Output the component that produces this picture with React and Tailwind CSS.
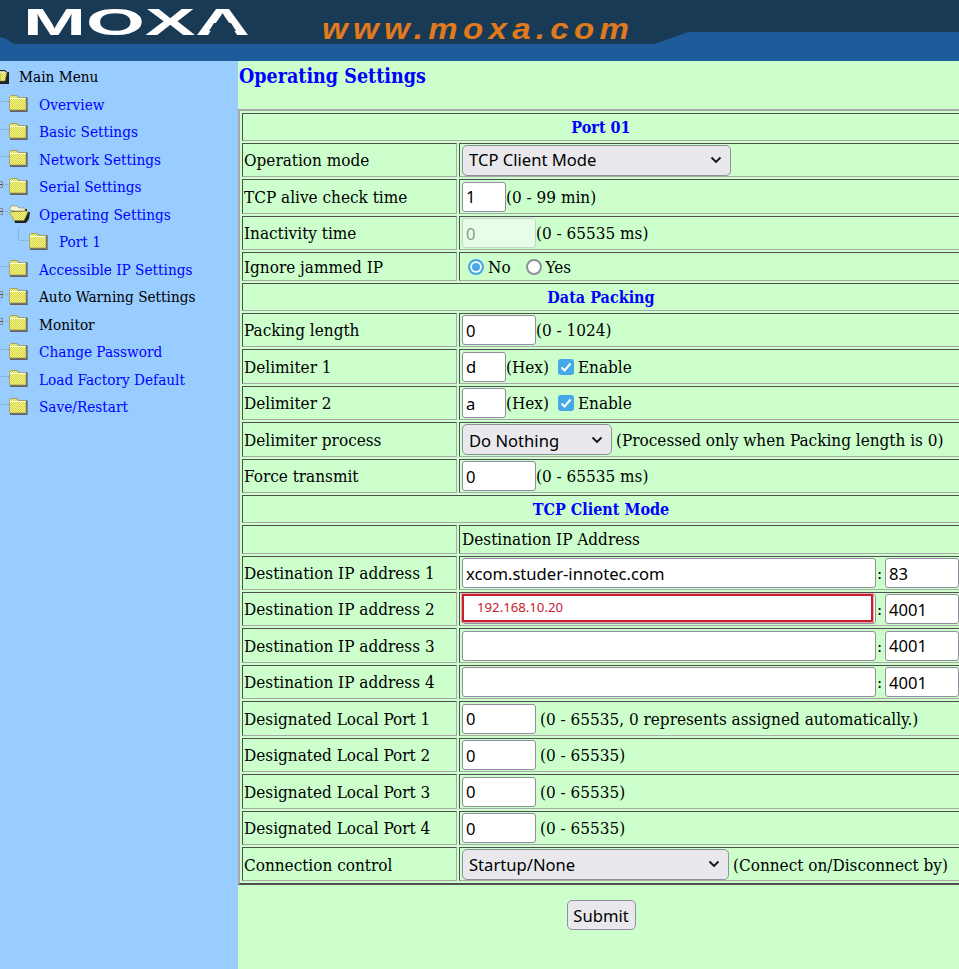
const serif = "font-['DejaVu_Serif_Condensed','DejaVu_Serif',serif]";
const sans = "font-['Noto_Sans',sans-serif]";

function Folder({ x = 9, y = 4, open = false }) {
  if (open) {
    return (
      <g transform={`translate(${x} ${y})`}>
        <path d="M3 5 L4 2 L9 2 L11 4 L18 4 L18 7 L21 7 L20 14 L17 18 L6 18 Z" fill="#222" />
        <path d="M0.5 5 L2 1 L8 1 L10 3 L16 3 L16 6 L5 6 Z" fill="#f4f4d8" stroke="#8a8a50" strokeWidth="0.6" />
        <path d="M0.5 7 L17 6 L19 7 L15 15.5 L5 15.5 Z" fill="url(#dither)" stroke="#8a8a50" strokeWidth="0.6" />
      </g>
    );
  }
  return (
    <g transform={`translate(${x} ${y})`}>
      <path d="M1 3 L2 0.5 L8 0.5 L10 2.5 L18.5 2.5 L18.5 17 L1 17 Z" fill="#3a3a3a" />
      <path d="M0.5 2 L2 0.5 L8 0.5 L9.5 2.5 L17 2.5 L17 15 L0.5 15 Z" fill="url(#dither)" stroke="#9a9a60" strokeWidth="0.8" />
      <path d="M1 3.5 L16.5 3.5" stroke="#fffff0" strokeWidth="1" />
      <path d="M1 16 L18 16 L18 4" stroke="#8a8a8a" strokeWidth="1" fill="none" />
    </g>
  );
}

function TreeIcon({ kind }) {
  if (kind === "root") {
    return (
      <svg className="shrink-0 w-[19px] h-[28px]" viewBox="0 0 19 28">
        <path d="M0 6 L5 6 L7 8 L9 8 L9 20 L0 20 Z" fill="#222" />
        <path d="M0 8 L7 8 L5 17 L0 17 Z" fill="url(#dither)" stroke="#8a8a50" strokeWidth="0.6" />
        <path d="M0 8 L5 8" stroke="#f4f4d8" strokeWidth="1.5" />
      </svg>
    );
  }
  if (kind === "child") {
    return (
      <svg className="shrink-0 w-[59px] h-[28px]" viewBox="0 0 59 28">
        <path d="M18.5 0 V11.5 H29" stroke="#8a9ab0" strokeWidth="1" strokeDasharray="1 1" fill="none" />
        <Folder x={29} y={4} />
      </svg>
    );
  }
  const plus = kind === "plus" || kind === "openplus";
  return (
    <svg className="shrink-0 w-[39px] h-[28px]" viewBox="0 0 39 28">
      <path d={plus ? "M3 10.5 H9" : "M0 10.5 H9"} stroke="#8a9ab0" strokeWidth="1" strokeDasharray="1 1" fill="none" />
      {plus && (
        <g>
          <rect x="-3.5" y="7.5" width="6" height="6" fill="#a9c9ec" stroke="#7f8ea3" />
          <path d="M0 10.5 H2" stroke="#444" strokeWidth="1" />
        </g>
      )}
      <Folder open={kind === "openplus"} x={9} y={4} />
    </svg>
  );
}

const menu = [
  ["root", "Main Menu", "k"],
  ["leaf", "Overview"],
  ["leaf", "Basic Settings"],
  ["leaf", "Network Settings"],
  ["plus", "Serial Settings"],
  ["openplus", "Operating Settings"],
  ["child", "Port 1"],
  ["leaf", "Accessible IP Settings"],
  ["plus", "Auto Warning Settings", "k"],
  ["plus", "Monitor", "k"],
  ["leaf", "Change Password"],
  ["leaf", "Load Factory Default"],
  ["leaf", "Save/Restart"],
];

function Chevron() {
  return (
    <svg className="absolute right-[9px] top-1/2 -translate-y-1/2 w-[12px] h-[8px] pointer-events-none" viewBox="0 0 12 8">
      <path d="M1.5 1.5 L6 6 L10.5 1.5" stroke="#111" strokeWidth="1.8" fill="none" />
    </svg>
  );
}

function Select({ value, className, low = false }) {
  return (
    <span className={`relative inline-block h-[31px] ml-[2px] shrink-0 ${className}`}>
      <select className={`${sans} appearance-none w-full h-full bg-[#e9e9ed] border border-[#8f8f9d] rounded-[5px] pl-[6px] text-[16.6px] text-black ${low ? "pt-[2px]" : ""}`} defaultValue={value}>
        <option>{value}</option>
      </select>
      <Chevron />
    </span>
  );
}

function Input({ value = "", className = "w-[74px]", disabled = false }) {
  return (
    <input
      readOnly
      disabled={disabled}
      defaultValue={value}
      className={`${sans} ${className} h-[30px] ml-[2px] shrink-0 rounded-[3px] px-[3px] text-[16.6px] ${disabled ? "bg-[#e8fde8] border border-[#c4d6cc] text-[#8a9a90]" : "bg-white border border-[#8f8f9d] text-black"}`}
    />
  );
}

function Check() {
  return (
    <span className="w-4 h-4 rounded-[3px] bg-[#45a9e8] flex items-center justify-center shrink-0 ml-[9px] mr-1">
      <svg className="w-[12px] h-[12px]" viewBox="0 0 12 12">
        <path d="M1.5 6.5 L4.6 9.5 L10.5 2.5" stroke="#fff" strokeWidth="2" fill="none" />
      </svg>
    </span>
  );
}

const tdBase = "border border-t-[#4f4f4f] border-l-[#4f4f4f] border-b-[#a9a9a9] border-r-[#a9a9a9] p-0";

function Head({ h, children }) {
  return (
    <tr>
      <td colSpan={2} className={`${tdBase} ${h} !pt-[2px] text-center font-bold text-[16px] text-[#0000ff]`}>{children}</td>
    </tr>
  );
}

function Row({ h, label, children }) {
  return (
    <tr>
      <td className={`${tdBase} ${h} !pl-[1px] whitespace-nowrap`}>{label}</td>
      <td className={`${tdBase} ${h}`}>
        <div className="flex items-center whitespace-nowrap">{children}</div>
      </td>
    </tr>
  );
}

function Colon() {
  return <span className="w-[9px] pl-[1px] shrink-0">:</span>;
}

export default function App() {
  return (
    <div className={`${serif} w-[959px] h-[969px] overflow-hidden flex flex-col text-[17px] text-black bg-[#ccffcc]`}>
      <svg width="0" height="0" className="absolute">
        <defs>
          <pattern id="dither" width="2" height="2" patternUnits="userSpaceOnUse">
            <rect width="2" height="2" fill="#f6f67e" />
            <rect width="1" height="1" fill="#d4d450" />
            <rect x="1" y="1" width="1" height="1" fill="#d4d450" />
          </pattern>
        </defs>
      </svg>

      <header className="h-[61px] shrink-0 bg-[#193a55]">
        <svg className="block w-[959px] h-[61px]" viewBox="0 0 959 61">
          <path d="M0 37 Q6 38 14 44 L655 44 L688 32 L959 32 L959 61 L0 61 Z" fill="#1e5b9a" />
          <text x="23" y="35" fill="#fff" fontFamily="Liberation Sans" fontWeight="700" fontSize="36" textLength="227" lengthAdjust="spacingAndGlyphs">MOXA</text>
          <polygon points="209,31 236,31 231,23 214,23" fill="#193a55" />
          <text transform="translate(322 39) scale(1.1 1)" fill="#e07a1c" fontFamily="Liberation Sans" fontWeight="700" fontStyle="italic" fontSize="30" textLength="279" lengthAdjust="spacing">www.moxa.com</text>
        </svg>
      </header>

      <div className="flex flex-1 min-h-0">
        <nav className="w-[238px] shrink-0 bg-[#99ccff] pt-[3px] text-[15.2px]">
          {menu.map(([kind, label, color]) => (
            <div key={label} className="h-[27.5px] flex items-center whitespace-nowrap">
              <TreeIcon kind={kind} />
              <span className={color ? "text-black" : "text-[#0000ff]"}>{label}</span>
            </div>
          ))}
        </nav>

        <main className="flex-1 min-w-0">
          <h2 className="font-bold text-[#0000ff] text-[19.5px] leading-[30px] pl-[1px] mt-[1px] mb-[17px]">Operating Settings</h2>
          <table className="table-fixed border-separate border-spacing-[2px] w-[726px] leading-[22px] border-2 border-t-[#a9a9a9] border-l-[#a9a9a9] border-b-[#4f4f4f] border-r-[#4f4f4f]">
            <colgroup>
              <col className="w-[215px]" />
              <col />
            </colgroup>
            <tbody>
              <Head h="h-[28px]">Port 01</Head>
              <Row h="h-[34px]" label="Operation mode"><Select value="TCP Client Mode" className="w-[269px]" /></Row>
              <Row h="h-[35px]" label="TCP alive check time"><Input value="1" className="w-[44px]" /><span>(0 - 99 min)</span></Row>
              <Row h="h-[34px]" label="Inactivity time"><Input value="0" disabled /><span>(0 - 65535 ms)</span></Row>
              <Row h="h-[29px]" label="Ignore jammed IP">
                <input type="radio" readOnly checked className="appearance-none w-4 h-4 rounded-full border-2 border-[#45a9e8] bg-[#45a9e8] shadow-[inset_0_0_0_2px_white] ml-[8px] mr-1 shrink-0" />
                <span>No</span>
                <input type="radio" readOnly checked={false} className="appearance-none w-4 h-4 rounded-full border-2 border-[#8f8f9d] bg-white ml-[15px] mr-1 shrink-0" />
                <span>Yes</span>
              </Row>
              <Head h="h-[28px]">Data Packing</Head>
              <Row h="h-[34px]" label="Packing length"><Input value="0" /><span>(0 - 1024)</span></Row>
              <Row h="h-[35px]" label="Delimiter 1"><Input value="d" className="w-[44px]" /><span>(Hex)</span><Check /><span>Enable</span></Row>
              <Row h="h-[34px]" label="Delimiter 2"><Input value="a" className="w-[44px]" /><span>(Hex)</span><Check /><span>Enable</span></Row>
              <Row h="h-[35px]" label="Delimiter process"><Select low value="Do Nothing" className="w-[150px]" /><span className="ml-[4px]">(Processed only when Packing length is 0)</span></Row>
              <Row h="h-[34px]" label="Force transmit"><Input value="0" /><span>(0 - 65535 ms)</span></Row>
              <Head h="h-[28px]">TCP Client Mode</Head>
              <Row h="h-[29px]" label=""><span className="ml-[2px] pb-[2px]">Destination IP Address</span></Row>
              <Row h="h-[34px]" label="Destination IP address 1"><Input value="xcom.studer-innotec.com" className="w-[414px]" /><Colon /><Input value="83" className="w-[74px] !ml-0" /></Row>
              <Row h="h-[34px]" label="Destination IP address 2">
                <span className="relative ml-[2px] shrink-0 w-[414px] h-[30px] block">
                  <Input className="w-[414px] !ml-0" />
                  <span className={`${sans} absolute left-0 top-0 w-[411px] h-[28px] bg-white border-[2px] border-[#c9202f] shadow-[0_0_0_1px_#e9a9b0] text-[#c9202f] text-[13.2px] leading-[22px] pl-[13px]`}>192.168.10.20</span>
                </span>
                <Colon /><Input value="4001" className="w-[74px] !ml-0" />
              </Row>
              <Row h="h-[35px]" label="Destination IP address 3"><Input className="w-[414px]" /><Colon /><Input value="4001" className="w-[74px] !ml-0" /></Row>
              <Row h="h-[34px]" label="Destination IP address 4"><Input className="w-[414px]" /><Colon /><Input value="4001" className="w-[74px] !ml-0" /></Row>
              <Row h="h-[35px]" label="Designated Local Port 1"><Input value="0" /><span className="ml-[4px]">(0 - 65535, 0 represents assigned automatically.)</span></Row>
              <Row h="h-[34px]" label="Designated Local Port 2"><Input value="0" /><span className="ml-[4px]">(0 - 65535)</span></Row>
              <Row h="h-[35px]" label="Designated Local Port 3"><Input value="0" /><span className="ml-[4px]">(0 - 65535)</span></Row>
              <Row h="h-[34px]" label="Designated Local Port 4"><Input value="0" /><span className="ml-[4px]">(0 - 65535)</span></Row>
              <Row h="h-[34px]" label={<span className="block pt-[2px]">Connection control</span>}><Select low value="Startup/None" className="w-[267px]" /><span className="ml-[4px] pt-[2px]">(Connect on/Disconnect by)</span></Row>
            </tbody>
          </table>
          <div className="flex justify-center mt-[15px] w-[726px]">
            <button className={`${sans} w-[69px] h-[30px] pt-[2px] bg-[#e9e9ed] border border-[#8f8f9d] rounded-[5px] text-[16.6px] text-black`}>Submit</button>
          </div>
        </main>
      </div>
    </div>
  );
}
